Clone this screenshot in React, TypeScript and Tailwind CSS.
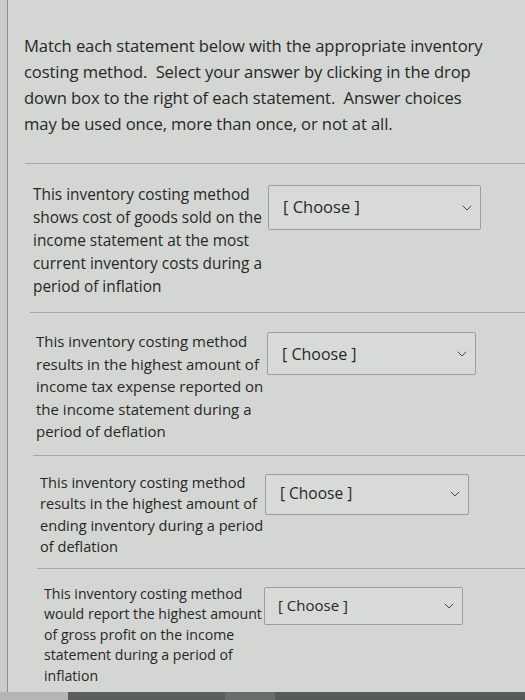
import { ChevronDown } from 'lucide-react';

interface Item {
  lines: string[];
  text: string;
  row: string;
  select: string;
  rule: string;
}

const items: Item[] = [
  {
    lines: ['This inventory costing method', 'shows cost of goods sold on the', 'income statement at the most', 'current inventory costs during a', 'period of inflation'],
    text: 'pl-[25px] pt-[19px] text-[15.4px] leading-[23px] w-[260px]',
    row: 'pb-[14px]',
    select: 'mt-[21px] w-[213px] h-[45px] text-[16.5px] pl-[14px]',
    rule: 'ml-[22px]',
  },
  {
    lines: ['This inventory costing method', 'results in the highest amount of', 'income tax expense reported on', 'the income statement during a', 'period of deflation'],
    text: 'pl-[28px] pt-[17px] text-[15px] leading-[22.5px] w-[259px]',
    row: 'pb-[12px]',
    select: 'mt-[19px] w-[209px] h-[43px] text-[16px] pl-[14px]',
    rule: 'ml-[25px]',
  },
  {
    lines: ['This inventory costing method', 'results in the highest amount of', 'ending inventory during a period', 'of deflation'],
    text: 'pl-[32px] pt-[16px] text-[14.6px] leading-[21.5px] w-[257px]',
    row: 'pb-[10px]',
    select: 'mt-[18px] w-[204px] h-[41px] text-[15.5px] pl-[14px]',
    rule: 'ml-[29px]',
  },
  {
    lines: ['This inventory costing method', 'would report the highest amount', 'of gross profit on the income', 'statement during a period of', 'inflation'],
    text: 'pl-[36px] pt-[15px] text-[14.1px] leading-[20.5px] w-[256px]',
    row: 'pb-[6px]',
    select: 'mt-[18px] w-[199px] h-[38px] text-[15px] pl-[13px]',
    rule: '',
  },
];

export default function App() {
  return (
    <div
      className="w-[525px] h-[700px] overflow-hidden flex flex-col bg-[#d4d6d3] text-[#262827]"
      style={{ fontFamily: '"Open Sans", "Liberation Sans", sans-serif' }}
    >
      <div className="flex flex-1 min-h-0">
        <div className="w-[8px] shrink-0 bg-[#cacdca] border-r border-[#8e918f]" />
        <div className="flex-1 flex flex-col">
          <p className="pl-[16px] pt-[33px] pr-[20px] text-[16.6px] leading-[26px] tracking-[-0.1px] font-[500]">
            Match each statement below with the appropriate inventory
            <br />
            costing method.&nbsp; Select your answer by clicking in the drop
            <br />
            down box to the right of each statement.&nbsp; Answer choices
            <br />
            may be used once, more than once, or not at all.
          </p>
          <div className="ml-[17px] mt-[26px] border-t border-[#a6a8a6]" />

          {items.map((item, i) => (
            <div key={i}>
              <div className={`flex items-start ${item.row}`}>
                <div className={`shrink-0 font-[500] ${item.text}`}>
                  {item.lines.map((l, j) => (
                    <div key={j} className="whitespace-nowrap">
                      {l}
                    </div>
                  ))}
                </div>
                <div
                  className={`flex items-center justify-between pr-[5px] border border-[#9b9e9b] rounded-[2px] bg-[#d8dad7] ${item.select}`}
                >
                  <span>[ Choose ]</span>
                  <ChevronDown className="w-[16px] h-[16px] text-[#3a3c3b]" strokeWidth={1.4} />
                </div>
              </div>
              {item.rule && <div className={`border-t border-[#a6a8a6] ${item.rule}`} />}
            </div>
          ))}
        </div>
      </div>
      <div className="h-[8px] shrink-0 flex">
        <div className="w-[68px] bg-[#b4b6b3]" />
        <div className="w-[157px] bg-[#5b5e5e]" />
        <div className="w-[50px] bg-[#6a6d6d]" />
        <div className="flex-1 bg-[#575a5a]" />
      </div>
    </div>
  );
}
